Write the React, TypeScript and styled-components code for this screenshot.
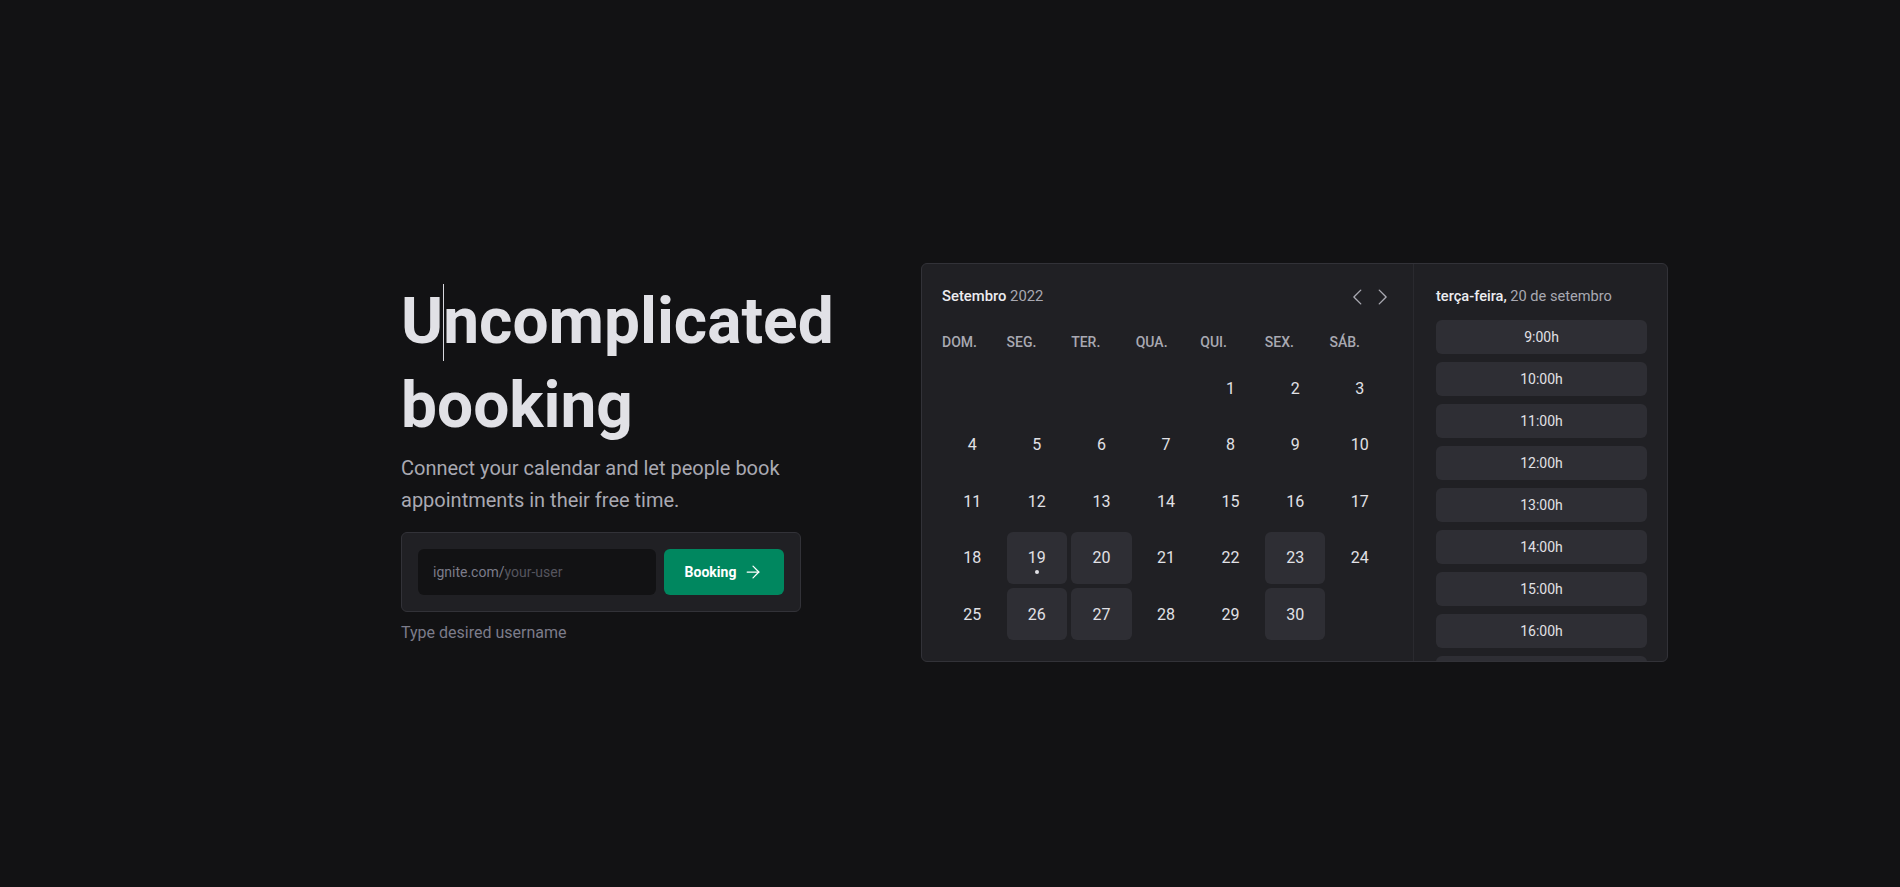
import React from "react";
import styled, { createGlobalStyle } from "styled-components";
import { ArrowRight } from "lucide-react";
import { PiCaretLeft, PiCaretRight } from "react-icons/pi";

const GlobalStyle = createGlobalStyle`
  * { box-sizing: border-box; }
  html, body { margin: 0; padding: 0; background: #121214; }
  body {
    font-family: Roboto, "Noto Sans", "Liberation Sans", sans-serif;
    color: #e1e1e6;
    -webkit-font-smoothing: antialiased;
  }
`;

const Page = styled.main`
  min-height: 100vh;
  display: flex;
  align-items: center;
  padding: 38px 0 0 401px;
`;

const Hero = styled.section`
  width: 440px;
  flex-shrink: 0;
  display: flex;
  flex-direction: column;
`;

const Heading = styled.h1`
  margin: 0;
  font-size: 64px;
  line-height: 84px;
  font-weight: 700;
  color: #e1e1e6;
`;

const Caret = styled.span`
  display: inline-block;
  width: 1px;
  height: 77px;
  margin-right: -1px;
  vertical-align: -18px;
  background: #d8d8de;
`;

const Lead = styled.p`
  margin: 4px 0 0;
  font-size: 20px;
  line-height: 32px;
  color: #a9a9b2;
`;

const Form = styled.form`
  margin-top: 16px;
  width: 400px;
  display: grid;
  grid-template-columns: minmax(0, 1fr) 120px;
  gap: 8px;
  padding: 16px;
  background: #202024;
  border: 1px solid #323238;
  border-radius: 6px;
`;

const InputBox = styled.label`
  display: flex;
  align-items: center;
  min-width: 0;
  height: 46px;
  padding: 0 15px;
  background: #121214;
  border-radius: 6px;
  font-size: 14px;
`;

const Prefix = styled.span`
  color: #7c7c8a;
`;

const Input = styled.input`
  flex: 1;
  width: 0;
  min-width: 0;
  border: 0;
  outline: 0;
  background: transparent;
  padding: 0;
  font: inherit;
  color: #e1e1e6;
  &::placeholder { color: #55555e; }
`;

const Button = styled.button`
  height: 46px;
  border: 0;
  border-radius: 6px;
  background: #00875f;
  color: #ffffff;
  font-family: inherit;
  font-size: 14px;
  font-weight: 700;
  display: flex;
  align-items: center;
  justify-content: center;
  gap: 7px;
  cursor: pointer;
`;

const Annotation = styled.p`
  margin: 8px 0 0;
  font-size: 16px;
  line-height: 25.6px;
  color: #7c7c8a;
`;

const Card = styled.section`
  margin-left: 80px;
  display: flex;
  align-items: stretch;
  background: #202024;
  border: 1px solid #323238;
  border-radius: 6px;
`;

const CalendarPanel = styled.div`
  width: 491px;
  padding: 20px 23px 21px 20px;
`;

const CalendarHeader = styled.header`
  display: flex;
  align-items: center;
  justify-content: space-between;
  height: 25.6px;
`;

const MonthTitle = styled.h2`
  margin: 0;
  font-size: 14.8px;
  line-height: 25.6px;
  font-weight: 500;
  color: #ececf0;
  span { color: #a9a9b2; font-weight: 400; }
`;

const Actions = styled.div`
  display: flex;
  gap: 2px;
  margin-right: -3px;
`;

const NavButton = styled.button`
  width: 22px;
  height: 22px;
  padding: 0;
  border: 0;
  background: transparent;
  color: #a9a9b2;
  display: flex;
  align-items: center;
  justify-content: center;
  cursor: pointer;
  svg { width: 22px; height: 22px; }
`;

const WeekRow = styled.div`
  margin-top: 21px;
  display: grid;
  grid-template-columns: repeat(7, 1fr);
  column-gap: 4px;
`;

const WeekLabel = styled.span`
  font-size: 14px;
  line-height: 22.4px;
  font-weight: 500;
  color: #a9a9b2;
`;

const DayGrid = styled.div`
  margin-top: 9px;
  display: grid;
  grid-template-columns: repeat(7, 1fr);
  grid-auto-rows: 52px;
  column-gap: 4px;
  row-gap: 4.5px;
`;

const Day = styled.button<{ $available?: boolean; $today?: boolean; $start?: number }>`
  position: relative;
  border: 0;
  padding: 0;
  border-radius: 6px;
  font-family: inherit;
  font-size: 16px;
  color: #e1e1e6;
  background: ${(p) => (p.$available ? "#2e2e34" : "transparent")};
  cursor: ${(p) => (p.$available ? "pointer" : "default")};
  ${(p) => (p.$start ? `grid-column-start: ${p.$start};` : "")}
  &::after {
    content: "";
    display: ${(p) => (p.$today ? "block" : "none")};
    position: absolute;
    left: 50%;
    top: 38px;
    width: 4px;
    height: 4px;
    margin-left: -2px;
    border-radius: 50%;
    background: #e1e1e6;
  }
`;

const TimePicker = styled.aside`
  width: 254px;
  contain: size;
  overflow: hidden;
  border-left: 1px solid #2a2a2f;
  padding: 20px 20px 0 22px;
`;

const TimeHeader = styled.h3`
  margin: 0;
  font-size: 14.6px;
  line-height: 25.6px;
  font-weight: 500;
  color: #ececf0;
  span { color: #a9a9b2; font-weight: 400; }
`;

const TimeList = styled.div`
  margin-top: 10px;
  display: flex;
  flex-direction: column;
  gap: 8px;
`;

const TimeSlot = styled.button`
  height: 34px;
  flex-shrink: 0;
  border: 0;
  border-radius: 6px;
  background: #2e2e34;
  color: #e1e1e6;
  font-family: inherit;
  font-size: 14px;
  cursor: pointer;
`;

const weekdays = ["DOM.", "SEG.", "TER.", "QUA.", "QUI.", "SEX.", "SÁB."];
const available = new Set([19, 20, 23, 26, 27, 30]);
const days = Array.from({ length: 30 }, (_, i) => i + 1);
const slots = [9, 10, 11, 12, 13, 14, 15, 16, 17, 18];

export default function App() {
  return (
    <>
      <GlobalStyle />
      <Page>
        <Hero>
          <Heading>
            U<Caret />ncomplicated booking
          </Heading>
          <Lead>Connect your calendar and let people book appointments in their free time.</Lead>
          <Form onSubmit={(e) => e.preventDefault()}>
            <InputBox>
              <Prefix>ignite.com/</Prefix>
              <Input placeholder="your-user" />
            </InputBox>
            <Button type="submit">
              Booking
              <ArrowRight size={20} strokeWidth={1.5} />
            </Button>
          </Form>
          <Annotation>Type desired username</Annotation>
        </Hero>

        <Card>
          <CalendarPanel>
            <CalendarHeader>
              <MonthTitle>
                Setembro <span>2022</span>
              </MonthTitle>
              <Actions>
                <NavButton aria-label="Mês anterior">
                  <PiCaretLeft />
                </NavButton>
                <NavButton aria-label="Próximo mês">
                  <PiCaretRight />
                </NavButton>
              </Actions>
            </CalendarHeader>
            <WeekRow>
              {weekdays.map((w) => (
                <WeekLabel key={w}>{w}</WeekLabel>
              ))}
            </WeekRow>
            <DayGrid>
              {days.map((d) => (
                <Day
                  key={d}
                  $start={d === 1 ? 5 : undefined}
                  $available={available.has(d)}
                  $today={d === 19}
                >
                  {d}
                </Day>
              ))}
            </DayGrid>
          </CalendarPanel>
          <TimePicker>
            <TimeHeader>
              terça-feira, <span>20 de setembro</span>
            </TimeHeader>
            <TimeList>
              {slots.map((h) => (
                <TimeSlot key={h}>{h}:00h</TimeSlot>
              ))}
            </TimeList>
          </TimePicker>
        </Card>
      </Page>
    </>
  );
}
